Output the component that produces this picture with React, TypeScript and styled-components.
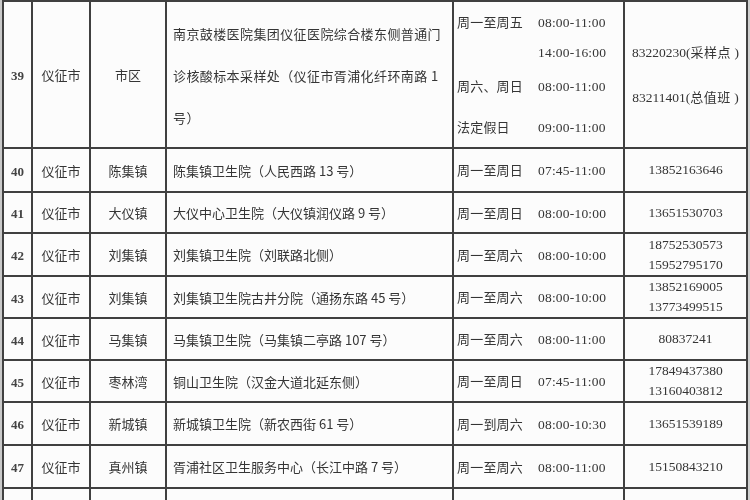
import React from "react";
import styled, { createGlobalStyle } from "styled-components";

const Global = createGlobalStyle`
  html, body { margin: 0; padding: 0; background: #f7f7f7; overflow: hidden; }
  body { width: 750px; height: 500px; }
`;

const Page = styled.div`
  width: 750px;
  height: 500px;
  overflow: hidden;
  background: linear-gradient(to right, #c9c9c9 0, #c9c9c9 2px, #fbfbfb 2px, #fbfbfb 746px, #cfcfcf 746px);
  padding-left: 2px;
  box-sizing: border-box;
`;

const Table = styled.table`
  border-collapse: collapse;
  table-layout: fixed;
  width: 745px;
  font-family: "Noto Sans CJK SC", "Liberation Serif", serif;
  font-size: 13px;
  color: #353535;
  background: #fcfcfc;
  filter: blur(0.35px);
`;

const Col = styled.col<{ $w: number }>`
  width: ${(p) => p.$w}px;
`;

const Row = styled.tr<{ $h: number }>`
  height: ${(p) => p.$h}px;
`;

const Cell = styled.td<{ $align?: "left" | "center" }>`
  border: 2px solid #404040;
  padding: ${(p) => (p.$align === "left" ? "0 4px 0 6px" : "0")};
  text-align: ${(p) => p.$align ?? "center"};
  vertical-align: middle;
  overflow: hidden;
  white-space: nowrap;
`;

const Num = styled.span`
  font-family: "Liberation Serif", serif;
  font-size: 13px;
  font-weight: bold;
  color: #444;
`;

const Digits = styled.span`
  font-family: "Liberation Serif", serif;
  font-size: 13.5px;
`;

const Address = styled.div`
  white-space: normal;
  line-height: 42px;
  letter-spacing: 0.4px;
  margin-top: 2px;
`;

const TimeGrid = styled.div`
  display: flex;
  flex-direction: column;
  margin-left: -3px;
`;

const TimeLine = styled.div<{ $top?: number }>`
  display: grid;
  grid-template-columns: 81px auto;
  align-items: baseline;
  height: 22px;
  line-height: 22px;
  margin-top: ${(p) => p.$top ?? 0}px;
  letter-spacing: 0.2px;
`;

const Phones = styled.div<{ $lh: number }>`
  line-height: ${(p) => p.$lh}px;
  font-family: "Liberation Serif", serif;
  font-size: 13.5px;
`;

const Note = styled.span`
  font-family: "Noto Sans CJK SC", sans-serif;
  font-size: 13px;
  letter-spacing: 0.5px;
`;

type R = {
  n: number;
  town: string;
  addr: string;
  day: string;
  time: string;
  phones: string[];
  h: number;
};

const rows: R[] = [
  { n: 40, town: "陈集镇", addr: "陈集镇卫生院（人民西路 13 号）", day: "周一至周日", time: "07:45-11:00", phones: ["13852163646"], h: 44 },
  { n: 41, town: "大仪镇", addr: "大仪中心卫生院（大仪镇润仪路 9 号）", day: "周一至周日", time: "08:00-10:00", phones: ["13651530703"], h: 41 },
  { n: 42, town: "刘集镇", addr: "刘集镇卫生院（刘联路北侧）", day: "周一至周六", time: "08:00-10:00", phones: ["18752530573", "15952795170"], h: 43 },
  { n: 43, town: "刘集镇", addr: "刘集镇卫生院古井分院（通扬东路 45 号）", day: "周一至周六", time: "08:00-10:00", phones: ["13852169005", "13773499515"], h: 42 },
  { n: 44, town: "马集镇", addr: "马集镇卫生院（马集镇二亭路 107 号）", day: "周一至周六", time: "08:00-11:00", phones: ["80837241"], h: 42 },
  { n: 45, town: "枣林湾", addr: "铜山卫生院（汉金大道北延东侧）", day: "周一至周日", time: "07:45-11:00", phones: ["17849437380", "13160403812"], h: 42 },
  { n: 46, town: "新城镇", addr: "新城镇卫生院（新农西街 61 号）", day: "周一到周六", time: "08:00-10:30", phones: ["13651539189"], h: 43 },
  { n: 47, town: "真州镇", addr: "胥浦社区卫生服务中心（长江中路 7 号）", day: "周一至周六", time: "08:00-11:00", phones: ["15150843210"], h: 43 },
];

export default function App() {
  return (
    <Page>
      <Global />
      <Table>
        <colgroup>
          <Col $w={29} />
          <Col $w={58} />
          <Col $w={76} />
          <Col $w={287} />
          <Col $w={171} />
          <Col $w={123} />
        </colgroup>
        <tbody>
          <Row $h={147}>
            <Cell><Num>39</Num></Cell>
            <Cell>仪征市</Cell>
            <Cell>市区</Cell>
            <Cell $align="left">
              <Address>
                南京鼓楼医院集团仪征医院综合楼东侧普通门诊核酸标本采样处（仪征市胥浦化纤环南路 1 号）
              </Address>
            </Cell>
            <Cell $align="left">
              <TimeGrid>
                <TimeLine><span>周一至周五</span><Digits>08:00-11:00</Digits></TimeLine>
                <TimeLine $top={9}><span></span><Digits>14:00-16:00</Digits></TimeLine>
                <TimeLine $top={11}><span>周六、周日</span><Digits>08:00-11:00</Digits></TimeLine>
                <TimeLine $top={19}><span>法定假日</span><Digits>09:00-11:00</Digits></TimeLine>
              </TimeGrid>
            </Cell>
            <Cell>
              <Phones $lh={44}>
                <div>83220230(<Note>采样点</Note> )</div>
                <div>83211401(<Note>总值班</Note> )</div>
              </Phones>
            </Cell>
          </Row>
          {rows.map((r) => (
            <Row key={r.n} $h={r.h}>
              <Cell><Num>{r.n}</Num></Cell>
              <Cell>仪征市</Cell>
              <Cell>{r.town}</Cell>
              <Cell $align="left">{r.addr}</Cell>
              <Cell $align="left">
                <TimeGrid>
                  <TimeLine><span>{r.day}</span><Digits>{r.time}</Digits></TimeLine>
                </TimeGrid>
              </Cell>
              <Cell>
                <Phones $lh={20}>
                  {r.phones.map((p) => (
                    <div key={p}>{p}</div>
                  ))}
                </Phones>
              </Cell>
            </Row>
          ))}
          <Row $h={43}>
            <Cell />
            <Cell />
            <Cell />
            <Cell />
            <Cell />
            <Cell />
          </Row>
        </tbody>
      </Table>
    </Page>
  );
}
